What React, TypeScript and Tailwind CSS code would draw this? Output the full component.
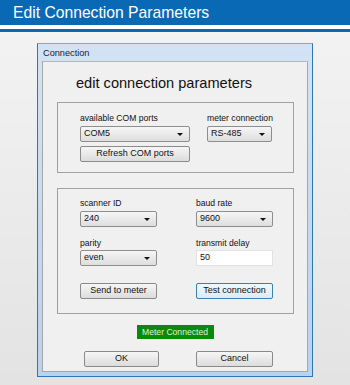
function Select({ value, className }: { value: string; className: string }) {
    return (
        <div className={`flex h-[16px] items-center justify-between rounded-[2px] border border-[#8e8e8e] bg-gradient-to-b from-[#f6f6f6] to-[#dedede] pl-[3px] pr-[6px] text-[9px] text-[#111] ${className}`}>
            <span>{value}</span>
            <span className="h-0 w-0 border-x-[3px] border-t-[3px] border-x-transparent border-t-[#111]" />
        </div>
    );
}

function Button({ label, className, focused }: { label: string; className: string; focused?: boolean }) {
    return (
        <div
            className={`flex h-[16px] items-center justify-center whitespace-nowrap rounded-[2px] border text-[9px] text-[#111] ${
                focused
                    ? 'border-[#3c7fb1] bg-gradient-to-b from-[#f0f8fd] to-[#dcebf7]'
                    : 'border-[#8a8a8a] bg-gradient-to-b from-[#f6f6f6] to-[#dcdcdc]'
            } ${className}`}
        >
            {label}
        </div>
    );
}

function Label({ text }: { text: string }) {
    return <div className="h-[10px] whitespace-nowrap text-[8.6px] leading-[10px] text-[#111]">{text}</div>;
}

export default function App() {
    return (
        <div className="flex h-[385px] w-[350px] flex-col overflow-hidden bg-gradient-to-b from-[#f4f4f4] to-[#e3e3e3] font-['Liberation_Sans',Arial,sans-serif]">
            <div className="flex h-[25px] items-center bg-[#0a69b5] pl-[13px] text-[15.7px] text-white">
                Edit Connection Parameters
            </div>
            <div className="h-[4px] bg-white" />
            <div className="h-[3px] bg-[#0a69b5]" />

            <div className="ml-[37px] mt-[11px] w-[276px] border border-[#3373b6] border-t-[#7fa8d6] bg-gradient-to-b from-[#d3e3f5] to-[#b9d2ee]">
                <div className="h-[17px] pl-[5px] text-[9.2px] leading-[18px] text-[#222]">Connection</div>
                <div className="mx-[4px] mb-[4px] flex h-[311px] flex-col border border-[#a7a7a7] border-t-[#b8b8b8] bg-[#f0f0f0]">
                    <div className="pl-[33px] pt-[14px] text-[14.6px] leading-[15px] text-[#111]">
                        edit connection parameters
                    </div>

                    <div className="ml-[14px] mt-[11px] flex h-[71px] w-[237px] gap-[17px] border border-[#a0a0a0] pl-[22px] pt-[10px]">
                        <div className="flex w-[110px] flex-col">
                            <Label text="available COM ports" />
                            <Select value="COM5" className="mt-[3px] w-[110px]" />
                            <Button label="Refresh COM ports" className="mt-[4px] w-[110px]" />
                        </div>
                        <div className="flex w-[65px] flex-col">
                            <Label text="meter connection" />
                            <Select value="RS-485" className="mt-[3px] w-[65px]" />
                        </div>
                    </div>

                    <div className="ml-[14px] mt-[15px] flex h-[126px] w-[237px] gap-[39px] border border-[#a0a0a0] pl-[22px] pt-[9px]">
                        <div className="flex w-[77px] flex-col">
                            <Label text="scanner ID" />
                            <Select value="240" className="mt-[3px] w-[77px]" />
                            <div className="mt-[11px]">
                                <Label text="parity" />
                            </div>
                            <Select value="even" className="mt-[2px] w-[77px]" />
                            <Button label="Send to meter" className="mt-[17px] w-[77px]" />
                        </div>
                        <div className="flex w-[77px] flex-col">
                            <Label text="baud rate" />
                            <Select value="9600" className="mt-[3px] w-[77px]" />
                            <div className="mt-[11px]">
                                <Label text="transmit delay" />
                            </div>
                            <div className="mt-[2px] flex h-[16px] w-[77px] items-center border border-[#e2e2e2] bg-white pl-[3px] text-[9px] text-[#111]">
                                50
                            </div>
                            <Button label="Test connection" focused className="mt-[17px] w-[77px]" />
                        </div>
                    </div>

                    <div className="mx-auto mt-[11px] flex h-[14px] w-[77px] items-center justify-center bg-[#0a8a0a] text-[8.6px] text-[#d8f5d8]">
                        Meter Connected
                    </div>

                    <div className="mt-[12px] flex gap-[37px] pl-[41px]">
                        <Button label="OK" className="w-[75px]" />
                        <Button label="Cancel" className="w-[77px]" />
                    </div>
                </div>
            </div>
        </div>
    );
}
